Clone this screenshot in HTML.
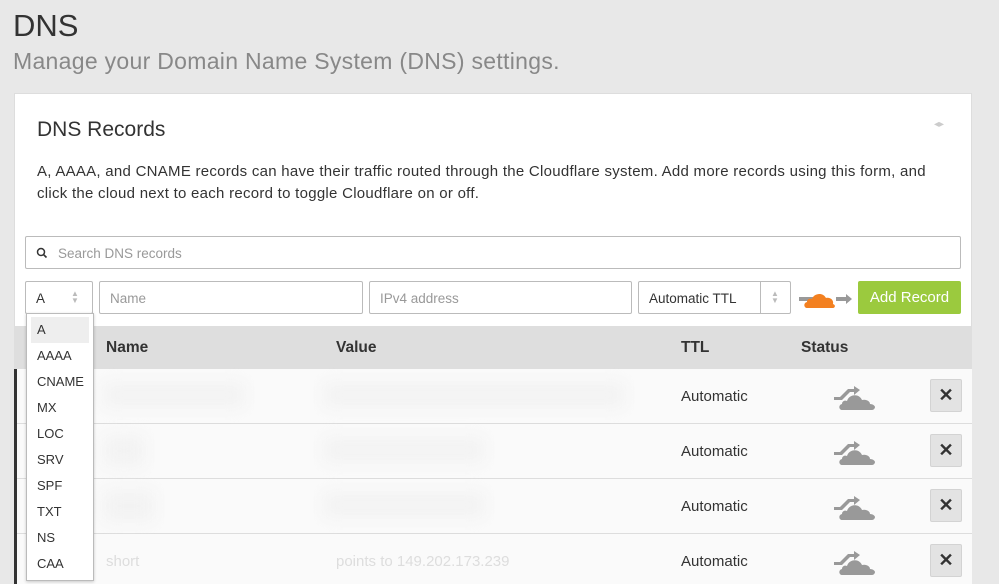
<!DOCTYPE html>
<html><head><style>
*{box-sizing:border-box;margin:0;padding:0}
html,body{width:999px;height:584px;overflow:hidden}
body{background:#e8e8e8;font-family:"Liberation Sans",sans-serif;color:#333;position:relative}
.abs{position:absolute}
h1{position:absolute;left:13px;top:8px;font-size:31px;font-weight:normal;color:#333}
.sub{left:13px;top:48px;font-size:23px;color:#888;letter-spacing:0.3px}
.card{left:14px;top:93px;width:958px;height:491px;background:#fff;border:1px solid #ddd;border-bottom:none}
.inp{position:absolute;height:33px;border:1px solid #bbb;border-radius:2px;background:#fff;font-size:13.5px;color:#999;padding:9px 10px}
.th{position:absolute;top:339px;font-size:15.5px;font-weight:bold;color:#333}
.row{position:absolute;left:14px;width:958px;height:55px;background:#fafafa;border-bottom:1px solid #ddd}
.auto{position:absolute;left:667px;top:19px;font-size:15px;color:#333}
.x{position:absolute;left:916px;top:10px;width:32px;height:33px;background:#e3e3e3;border:1px solid #d3d3d3;border-radius:2px;text-align:center;line-height:31px;font-size:18px;font-weight:bold;color:#333}
.blur{position:absolute;background:#f2f2f2;filter:blur(8px)}
.dd{left:26px;top:313px;width:68px;height:268px;background:#fff;border:1px solid #bbb;box-shadow:0 1px 3px rgba(0,0,0,.2)}
.dd div{height:26px;line-height:26px;padding-left:10px;font-size:13px;color:#333}
</style></head><body>
<h1>DNS</h1>
<div class="abs sub">Manage your Domain Name System (DNS) settings.</div>
<div class="abs card"></div>
<div class="abs" style="left:37px;top:118px;font-size:21px;color:#333">DNS Records</div>
<div class="abs" style="left:934px;top:119px;font-size:10px;color:#ccc">◂▸</div>
<div class="abs" style="left:37px;top:161px;font-size:15px;line-height:22px;color:#333;letter-spacing:0.27px;white-space:nowrap">A, AAAA, and CNAME records can have their traffic routed through the Cloudflare system. Add more records using this form, and<br>click the cloud next to each record to toggle Cloudflare on or off.</div>
<div class="inp" style="left:25px;top:236px;width:936px;padding-left:32px">Search DNS records</div>
<svg class="abs" style="left:36px;top:247px" width="12" height="12" viewBox="0 0 12 12"><circle cx="5" cy="5" r="3.5" fill="none" stroke="#333" stroke-width="1.5"/><path d="M7.5 7.5L10.5 10.5" stroke="#333" stroke-width="1.6"/></svg>
<div class="inp" style="left:25px;top:281px;width:68px;color:#333">A</div>
<div class="abs" style="left:71px;top:290px;font-size:8px;color:#bbb;line-height:7px">▲<br>▼</div>
<div class="inp" style="left:99px;top:281px;width:264px">Name</div>
<div class="inp" style="left:369px;top:281px;width:263px">IPv4 address</div>
<div class="inp" style="left:638px;top:281px;width:153px;color:#333">Automatic TTL</div>
<div class="abs" style="left:760px;top:282px;width:1px;height:31px;background:#bbb"></div>
<div class="abs" style="left:771px;top:290px;font-size:8px;color:#bbb;line-height:7px">▲<br>▼</div>
<svg class="abs" style="left:798px;top:287px" width="56" height="24" viewBox="0 0 56 24"><rect x="1" y="10" width="14" height="4" fill="#999"/><path d="M38 10h10v-3l6 5-6 5v-3h-10z" fill="#999"/><path d="M9 21c-3 0-4-5 0-6 0-3 3-4 5-3 2-6 11-7 14-1 4-1 8 2 7 6 3 1 2 4 0 4z" fill="#f38020"/></svg>
<div class="abs" style="left:858px;top:281px;width:103px;height:33px;background:#9bca3e;border-radius:2px;color:#fff;font-size:15px;text-align:center;line-height:33px">Add Record</div>
<div class="abs" style="left:14px;top:326px;width:958px;height:43px;background:#dedede"></div>
<div class="th" style="left:106px">Name</div>
<div class="th" style="left:336px">Value</div>
<div class="th" style="left:681px">TTL</div>
<div class="th" style="left:801px">Status</div>
<div class="abs" style="left:14px;top:369px;width:3px;height:215px;background:#333;z-index:2"></div>
<div class="row" style="top:369px"><div class="blur" style="left:90px;top:14px;width:140px;height:24px"></div><div class="blur" style="left:310px;top:14px;width:300px;height:24px"></div><div class="auto">Automatic</div><div class="x">✕</div></div>
<div class="row" style="top:424px"><div class="blur" style="left:90px;top:12px;width:40px;height:30px"></div><div class="blur" style="left:310px;top:14px;width:160px;height:24px"></div><div class="auto">Automatic</div><div class="x">✕</div></div>
<div class="row" style="top:479px"><div class="blur" style="left:90px;top:12px;width:50px;height:30px"></div><div class="blur" style="left:310px;top:14px;width:160px;height:24px"></div><div class="auto">Automatic</div><div class="x">✕</div></div>
<div class="row" style="top:534px;height:50px;border-bottom:none"><div class="auto" style="left:92px;color:#ddd">short</div><div class="auto" style="left:322px;color:#ddd">points to 149.202.173.239</div><div class="auto">Automatic</div><div class="x">✕</div></div>
<svg class="abs" style="left:832px;top:381px" width="48" height="30" viewBox="0 0 48 30"><path d="M2 16h6l8-8h6v-3l6 4-6 5v-3h-4l-8 8H2z" fill="#999"/><path d="M10 29c-3 0-4-5 0-6 0-3 3-4 5-3 2-7 12-8 15-1 4-1 8 1 8 4 3 0 5 2 5 3s-1 3-3 3z" fill="#999"/></svg>
<svg class="abs" style="left:832px;top:436px" width="48" height="30" viewBox="0 0 48 30"><path d="M2 16h6l8-8h6v-3l6 4-6 5v-3h-4l-8 8H2z" fill="#999"/><path d="M10 29c-3 0-4-5 0-6 0-3 3-4 5-3 2-7 12-8 15-1 4-1 8 1 8 4 3 0 5 2 5 3s-1 3-3 3z" fill="#999"/></svg>
<svg class="abs" style="left:832px;top:491px" width="48" height="30" viewBox="0 0 48 30"><path d="M2 16h6l8-8h6v-3l6 4-6 5v-3h-4l-8 8H2z" fill="#999"/><path d="M10 29c-3 0-4-5 0-6 0-3 3-4 5-3 2-7 12-8 15-1 4-1 8 1 8 4 3 0 5 2 5 3s-1 3-3 3z" fill="#999"/></svg>
<svg class="abs" style="left:832px;top:546px" width="48" height="30" viewBox="0 0 48 30"><path d="M2 16h6l8-8h6v-3l6 4-6 5v-3h-4l-8 8H2z" fill="#999"/><path d="M10 29c-3 0-4-5 0-6 0-3 3-4 5-3 2-7 12-8 15-1 4-1 8 1 8 4 3 0 5 2 5 3s-1 3-3 3z" fill="#999"/></svg>
<div class="abs dd" style="z-index:3">
<div style="background:#eee;margin:3px 4px 0 4px;padding-left:6px">A</div><div>AAAA</div><div>CNAME</div><div>MX</div><div>LOC</div><div>SRV</div><div>SPF</div><div>TXT</div><div>NS</div><div>CAA</div>
</div>
</body></html>
